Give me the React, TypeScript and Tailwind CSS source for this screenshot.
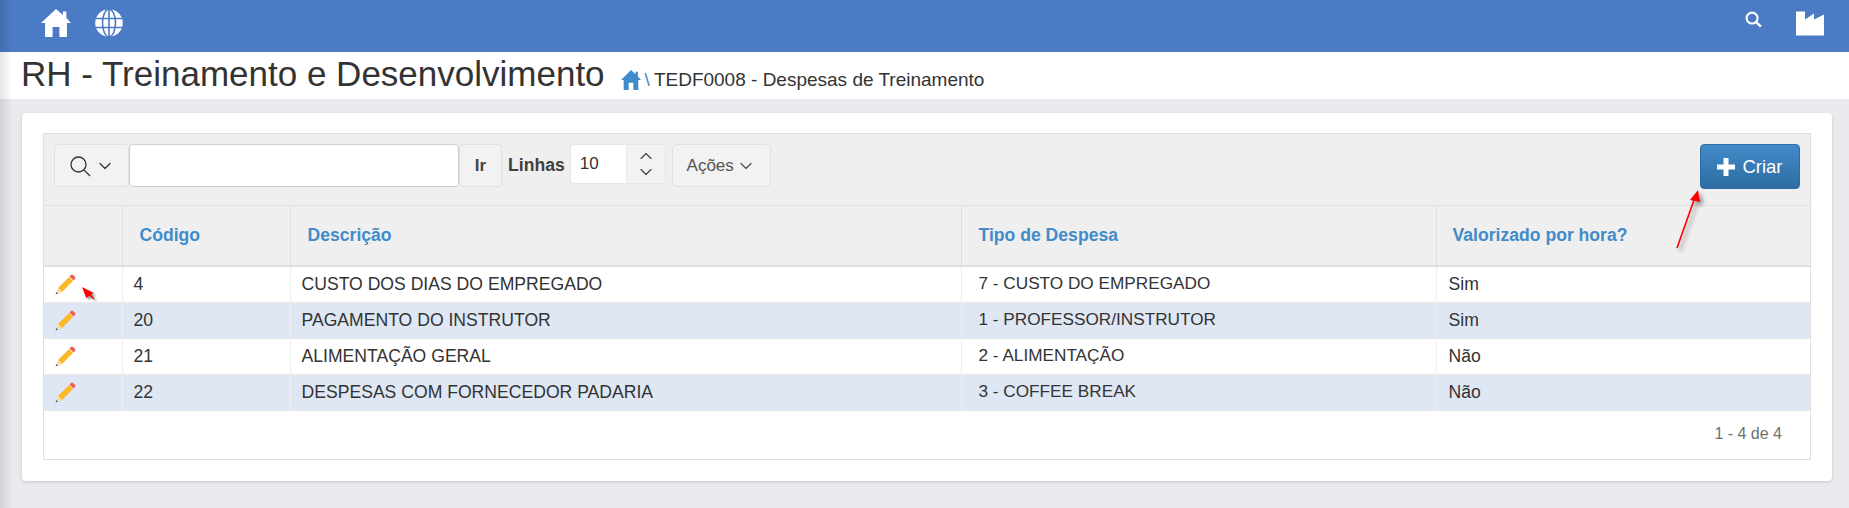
import { ChevronDown, ChevronUp } from 'lucide-react'

const font = { fontFamily: '"Liberation Sans", Arial, sans-serif' }

const rows = [
  { codigo: '4', descricao: 'CUSTO DOS DIAS DO EMPREGADO', tipo: '7 - CUSTO DO EMPREGADO', hora: 'Sim' },
  { codigo: '20', descricao: 'PAGAMENTO DO INSTRUTOR', tipo: '1 - PROFESSOR/INSTRUTOR', hora: 'Sim' },
  { codigo: '21', descricao: 'ALIMENTAÇÃO GERAL', tipo: '2 - ALIMENTAÇÃO', hora: 'Não' },
  { codigo: '22', descricao: 'DESPESAS COM FORNECEDOR PADARIA', tipo: '3 - COFFEE BREAK', hora: 'Não' },
]

function HomeIcon({ className }: { className?: string }) {
  return (
    <svg viewBox="0 0 26 28" className={className} fill="currentColor" preserveAspectRatio="none">
      <path d="M13 0 L19 6 V2.5 H22 V9 L26 14 H22.5 V28 H16 V18 H10 V28 H3.5 V14 H0 Z" />
    </svg>
  )
}

function GlobeIcon() {
  return (
    <svg viewBox="0 0 28 28" className="h-[28px] w-[28px]">
      <circle cx="14" cy="14" r="13.8" fill="#fff" />
      <g fill="none" stroke="#4a7bc4" strokeWidth="1.6">
        <ellipse cx="14" cy="14" rx="6.5" ry="13.8" />
        <path d="M14 0 V28 M0 9.5 H28 M0 18.5 H28" />
      </g>
    </svg>
  )
}

function SearchIcon() {
  return (
    <svg viewBox="0 0 18 18" className="h-[17px] w-[17px]" fill="none" stroke="#fff">
      <circle cx="7.5" cy="7.5" r="5.8" strokeWidth="2.2" />
      <path d="M11.8 11.8 L16.8 16.5" strokeWidth="2.6" />
    </svg>
  )
}

function FactoryIcon() {
  return (
    <svg viewBox="0 0 28 24" className="h-[25px] w-7" fill="#fff">
      <path d="M0 0 H9 V8 L18 2 V8 L28 3 V24 H0 Z" />
    </svg>
  )
}

function PencilIcon() {
  return (
    <svg viewBox="0 0 21 21" className="h-[21px] w-[21px]">
      <path d="M3 14 L14 3 L18 7 L7 18 Z" fill="#fbb829" />
      <path d="M14.5 2.5 L16 1 Q17 0.2 18 1 L20 3 Q20.8 4 20 5 L18.5 6.5 Z" fill="#f05a4f" />
      <path d="M3 14 L7 18 L1.5 20 L1 19.5 Z" fill="#fbdc9a" />
      <path d="M1.6 18 L3 19.4 L0.5 20.6 Z" fill="#46546a" />
    </svg>
  )
}

export default function App() {
  return (
    <div className="relative flex h-[508px] w-[1849px] flex-col overflow-hidden bg-[#e9e9ee]" style={font}>
      <header className="flex h-[52px] items-start justify-between bg-[#4a7bc4] pl-[41px] pr-[25px] pt-[9px] text-white">
        <div className="flex items-start gap-6">
          <HomeIcon className="h-7 w-[30px]" />
          <GlobeIcon />
        </div>
        <div className="flex items-start gap-[34px] pt-0.5">
          <SearchIcon />
          <FactoryIcon />
        </div>
      </header>

      <div className="flex h-[47px] items-center bg-white pl-[21px] text-[#333]">
        <h1 className="-mt-1 text-[35px] leading-none">RH - Treinamento e Desenvolvimento</h1>
        <div className="ml-4 mt-2 flex items-center text-[19px] leading-none">
          <HomeIcon className="h-5 w-5 text-[#428bca]" />
          <span className="mx-1 text-[#428bca]">\</span>
          <span>TEDF0008 - Despesas de Treinamento</span>
        </div>
      </div>

      <main className="pl-[22px] pr-[17px] pt-[14px]">
        <section className="h-[368px] rounded-sm bg-white px-[21px] pb-[21px] pt-5 shadow-[0_1px_3px_rgba(0,0,0,0.15)]">
          <div className="flex h-[327px] flex-col border border-[#dfdfdf]">
            <div className="flex h-[72px] items-start border-b border-[#dfdfdf] bg-[#efefef] px-[10px] pt-[10px]">
              <button className="flex h-[43px] w-[75px] items-center justify-center gap-1 rounded-sm border border-[#e0e0e0] bg-[#f2f2f2] text-[#333]">
                <svg viewBox="0 0 22 22" className="h-[22px] w-[22px]" fill="none" stroke="#333" strokeWidth="1.3">
                  <circle cx="9.5" cy="9.5" r="7.5" />
                  <path d="M15 15 L21 21" />
                </svg>
                <ChevronDown className="h-5 w-5" strokeWidth={1.5} />
              </button>
              <input className="h-[43px] w-[330px] rounded-sm border border-[#cfcfcf] bg-white" readOnly />
              <button className="h-[43px] w-[43px] rounded-sm border border-[#e0e0e0] bg-[#f2f2f2] text-[17px] font-bold text-[#444]">
                Ir
              </button>
              <span className="ml-[6px] mr-[5px] pt-[10px] text-[17.6px] font-bold leading-[22px] text-[#404040]">Linhas</span>
              <div className="flex h-10 rounded-sm border border-[#e6e6e6] bg-white">
                <span className="w-[55px] pl-[9px] pt-[10px] text-[17px] leading-[18px] text-[#333]">10</span>
                <span className="flex w-[39px] flex-col items-center justify-center border-l border-[#e6e6e6] bg-[#f2f2f2] text-[#444]">
                  <ChevronUp className="-mb-1 h-5 w-5" strokeWidth={1.4} />
                  <ChevronDown className="h-5 w-5" strokeWidth={1.4} />
                </span>
              </div>
              <button className="ml-[6px] flex h-[43px] w-[99px] items-center justify-center gap-0.5 rounded-sm border border-[#e0e0e0] bg-[#f2f2f2] text-[17px] text-[#555]">
                Ações
                <ChevronDown className="h-5 w-5" strokeWidth={1.5} />
              </button>
              <button className="ml-auto flex h-[45px] w-[100px] items-center justify-center gap-[7px] rounded-sm border border-[#2f6ca3] bg-gradient-to-b from-[#428bca] to-[#2d6ca2] text-[18.5px] text-white">
                <svg viewBox="0 0 18 18" className="h-[18px] w-[18px]" fill="#fff">
                  <path d="M6.5 0 H11.5 V6.5 H18 V11.5 H11.5 V18 H6.5 V11.5 H0 V6.5 H6.5 Z" />
                </svg>
                Criar
              </button>
            </div>

            <table className="w-full table-fixed border-collapse text-[17.6px] text-[#333]">
              <colgroup>
                <col className="w-[78px]" />
                <col className="w-[168px]" />
                <col className="w-[671px]" />
                <col className="w-[475px]" />
                <col />
              </colgroup>
              <thead>
                <tr className="h-[60px] border-b-2 border-[#dfdfdf] bg-[#efefef] text-left font-bold text-[#428bca]">
                  <th className="border-r border-[#dfdfdf]" />
                  <th className="border-r border-[#dfdfdf] pl-[17px]">Código</th>
                  <th className="border-r border-[#dfdfdf] pl-[17px]">Descrição</th>
                  <th className="border-r border-[#dfdfdf] pl-[17px]">Tipo de Despesa</th>
                  <th className="pl-4">Valorizado por hora?</th>
                </tr>
              </thead>
              <tbody>
                {rows.map((row, i) => (
                  <tr key={row.codigo} className={`h-9 border-b border-[#e8e8e8] ${i % 2 ? 'bg-[#dee7f3]' : 'bg-white'}`}>
                    <td className="border-r border-[#eeeeee] pl-[11px]">
                      <PencilIcon />
                    </td>
                    <td className="border-r border-[#eeeeee] pl-[11px]">{row.codigo}</td>
                    <td className="border-r border-[#eeeeee] pl-[11px]">{row.descricao}</td>
                    <td className="border-r border-[#eeeeee] pl-[17px] text-[17.2px]">{row.tipo}</td>
                    <td className="pl-3">{row.hora}</td>
                  </tr>
                ))}
              </tbody>
            </table>

            <div className="pr-7 pt-[13px] text-right text-[16px] leading-5 text-[#707070]">1 - 4 de 4</div>
          </div>
        </section>
      </main>

      <div className="pointer-events-none absolute inset-y-0 left-0 w-3 bg-gradient-to-r from-black/10 to-transparent" />
      <svg className="absolute left-[1670px] top-[188px] h-[70px] w-10 drop-shadow-[3px_3px_2px_rgba(0,0,0,0.4)]" viewBox="0 0 40 70" fill="#f00">
        <path d="M7 60 L24 12" stroke="#f00" strokeWidth="1.6" fill="none" />
        <path d="M28 2 L30 14 L20 12 Z" />
      </svg>
      <svg className="absolute left-[80px] top-[285px] h-5 w-5 drop-shadow-[2px_2px_1px_rgba(0,0,0,0.4)]" viewBox="0 0 20 20" fill="#f00">
        <path d="M2 2 L13.7 8 L6.3 13 Z" />
        <path d="M9 9 L14 14" stroke="#f00" strokeWidth="1.4" fill="none" />
      </svg>
    </div>
  )
}
